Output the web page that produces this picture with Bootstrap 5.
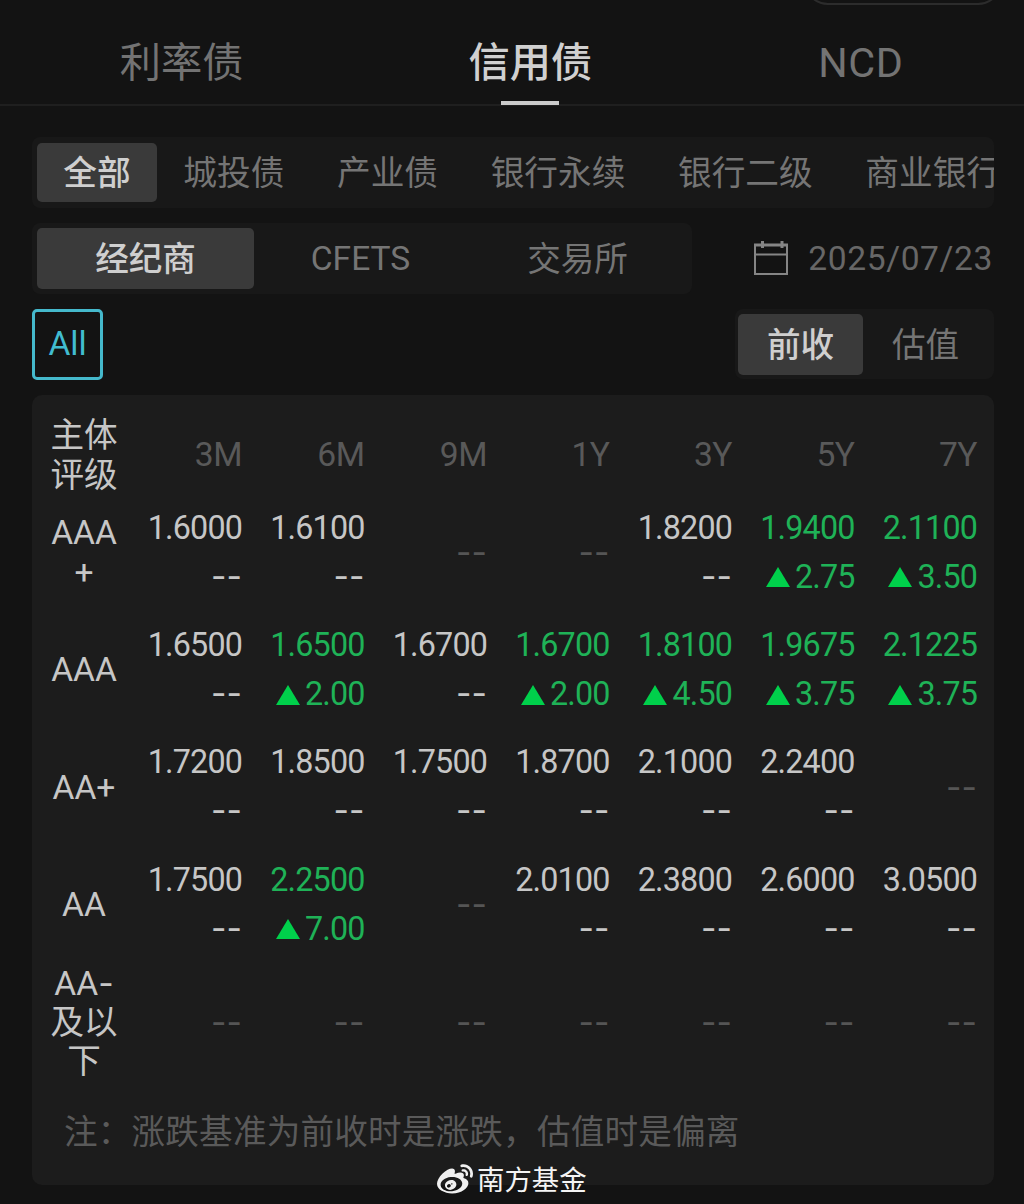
<!DOCTYPE html>
<html lang="zh-CN" data-bs-theme="dark">
<head>
<meta charset="utf-8">
<meta name="viewport" content="width=device-width, initial-scale=1">
<title>信用债</title>
<link href="https://cdn.jsdelivr.net/npm/bootstrap@5.3.0/dist/css/bootstrap.min.css" rel="stylesheet">
<style>
body{background:#131313;color:#c6c6c6;font-family:Roboto,"Noto Sans CJK SC",sans-serif;font-size:33.6px;line-height:40px;height:1204px;overflow:hidden;white-space:nowrap}
.pill-edge{left:804px;top:-50px;width:198px;height:55px;border:2px solid #2c2c2c;border-radius:24px}
.top-tabs{height:106px;border-bottom:2px solid #1f1f1f;font-size:41.3px}
.top-tabs .nav-link{padding:18px 0 0;height:105px;line-height:90px;color:#737373}
.top-tabs .nav-link.active{color:#d0d0d0;font-weight:500}
.tab-a{width:364px}.tab-b{width:335px}.tab-c{width:327px;letter-spacing:.6px}
.tab-line{left:138px;bottom:0;width:58px;height:4px;background:#cbcbcb}
.main-pad{padding:31px 30px 0 32px}
.seg{background:#181818;border-radius:8px;overflow:hidden}
.seg .btn{font-size:inherit;line-height:40px;border:0;padding:2px 0 0;border-radius:5px;color:#757575;flex-shrink:0}
.seg .btn.active{background:#3a3a3a;color:#cfcfcf;font-weight:500}
.seg-kind{height:71px;padding:6px 0 6px 5px;font-size:33.7px}
.seg-kind .btn{padding:2px 26.3px 0}
.seg-src{width:660px;height:71px;margin-top:15px;padding:5px}
.seg-src .btn{width:217px}
.seg-src .btn + .btn{margin-left:-2px;margin-right:2px}
.seg-src .btn.latin{padding-top:0}
.seg-base{width:259px;height:70px;padding:5px 3px 4px}
.seg-base .btn{width:125px}
.date-txt{color:#676767;letter-spacing:.6px;font-size:33.6px;margin-right:1px}
.cal-icon{margin-right:17px}
.all-box{width:71px;height:71px;border:3px solid #45b9cc;border-radius:5px;color:#41bcd0;line-height:63px}
.row-third{margin-top:15px}
.grid-card{margin-top:15px;height:790px;background:#1c1c1c;border-radius:10px;padding:18px 16px 0 13px}
.g-row{height:117.4px}
.g-row.g-head{height:82px;color:#595959}
.g-name{width:78px;white-space:normal;line-height:39.4px;color:#c6c6c6;padding-bottom:2px}
.g-head .g-name{padding:3px 0 0}
.g-val{width:122.5px;line-height:49px;letter-spacing:-.5px}
.g-num{font-size:32.3px;letter-spacing:-.85px;padding-bottom:2px}
.g-first{width:119px}
.g-up{color:#1fb257}
.g-up svg{fill:#00d04b;margin-right:5px}
.dashes{font-family:Inter,sans-serif;letter-spacing:0;font-size:33.6px}
.g-num .dashes{line-height:46px;padding-bottom:3px}
.g-none{color:#555;padding-bottom:0}
.note{padding-left:19px;margin-top:31px;color:#5a5a5a;letter-spacing:.2px}
.water{left:437px;top:1159px;font-size:27.4px;color:#f4f4f4;gap:4px}
.water span{padding-top:2px}
</style>
<script src="https://cdn.jsdelivr.net/npm/bootstrap@5.3.0/dist/js/bootstrap.bundle.min.js"></script>
</head>
<body>
<div class="pill-edge position-absolute"></div>
<nav class="nav top-tabs flex-nowrap text-center">
  <a class="nav-link tab-a">利率债</a>
  <a class="nav-link tab-b active position-relative">信用债<span class="tab-line position-absolute"></span></a>
  <a class="nav-link tab-c">NCD</a>
</nav>
<main class="main-pad">
  <div class="seg seg-kind d-flex">
    <button class="btn active">全部</button><button class="btn">城投债</button><button class="btn">产业债</button><button class="btn">银行永续</button><button class="btn">银行二级</button><button class="btn">商业银行</button>
  </div>
  <div class="d-flex justify-content-between">
    <div class="seg seg-src d-flex">
      <button class="btn active">经纪商</button><button class="btn latin">CFETS</button><button class="btn">交易所</button>
    </div>
    <div class="d-flex align-items-center pt-3">
      <svg class="cal-icon" width="40" height="36" viewBox="0 0 40 36" fill="none" stroke="#858585" stroke-width="2"><path d="M4 4H36V33H4ZM4 13.500H36"/><path stroke-width="3" d="M11.500 0V7M31 0V7M3 4H37"/></svg>
      <span class="date-txt">2025/07/23</span>
    </div>
  </div>
  <div class="row-third d-flex justify-content-between">
    <div class="all-box text-center">All</div>
    <div class="seg seg-base d-flex"><button class="btn active">前收</button><button class="btn">估值</button></div>
  </div>
  <section class="grid-card" id="grid"></section>
</main>
<div class="water position-absolute d-flex align-items-center">
  <svg width="36" height="36" viewBox="0 0 512 512" fill="#f0f0f0"><path d="M407 177.600c7.600-24-13.400-46.800-37.400-41.700-22 4.800-28.800-28.100-7.100-32.800 50.100-10.900 92.300 37.100 76.500 84.800-6.800 21.200-38.800 10.800-32-10.300zM214.800 446.700C108.500 446.700 0 395.300 0 310.400c0-44.300 28-95.400 76.300-143.700C176 67 279.500 65.800 249.900 161c-4 13.100 12.300 5.700 12.300 6 79.500-33.600 140.500-16.800 114 51.400-3.700 9.400 1.100 10.900 8.300 13.100 135.700 42.300 34.800 215.200-169.700 215.200zm143.700-146.300c-5.400-55.700-78.500-94-163.400-85.700-84.800 8.600-148.800 60.300-143.400 116s78.500 94 163.400 85.700c84.800-8.600 148.800-60.300 143.400-116zM347.900 35.100c-25.900 5.600-16.800 43.700 8.300 38.300 72.300-15.200 134.800 52.800 111.700 124-7.400 24.200 29.100 37 37.400 12 31.900-99.800-55.100-195.900-157.400-174.300zm-78.500 311c-17.100 38.800-66.800 60-109.100 46.300-40.800-13.100-58-53.400-40.300-89.700 17.700-35.400 63.100-55.400 103.400-45.100 42 10.800 63.100 50.200 46 88.500zm-86.300-30c-12.900-5.400-30 .3-38 12.900-8.300 12.900-4.300 28 8.600 34 13.100 6 30.800.3 39.100-12.900 8-13.100 3.700-28.300-9.700-34zm32.600-13.400c-5.100-1.700-11.400.6-14.300 5.400-2.900 5.100-1.400 10.600 3.700 12.900 5.100 2 11.700-.3 14.600-5.400 2.800-5.200 1.100-10.900-4-12.900z"/></svg>
  <span>南方基金</span>
</div>
<script>
// Each cell is "yield" or "yield/change"; an empty string is a missing quote.
const rows = [
  ['AAA<br>+', '1.6000','1.6100','','','1.8200','1.9400/2.75','2.1100/3.50'],
  ['AAA', '1.6500','1.6500/2.00','1.6700','1.6700/2.00','1.8100/4.50','1.9675/3.75','2.1225/3.75'],
  ['AA+', '1.7200','1.8500','1.7500','1.8700','2.1000','2.2400',''],
  ['AA', '1.7500','2.2500/7.00','','2.0100','2.3800','2.6000','3.0500'],
  ['AA<span class="dashes">-</span><br>及以<br>下', '','','','','','','']
];
const tri = '<svg width="24" height="20" viewBox="0 0 24 20"><path d="M12 0L24 20H0Z"/></svg>';
const cell = (v, i) => {
  const first = i ? '' : ' g-first';
  if (!v) return `<div class="g-val g-num text-end g-none${first}"><div class="dashes">--</div></div>`;
  const [y, d] = v.split('/');
  return d
    ? `<div class="g-val g-num text-end g-up${first}"><div>${y}</div><div class="d-flex justify-content-end align-items-center">${tri}${d}</div></div>`
    : `<div class="g-val g-num text-end${first}"><div>${y}</div><div class="dashes">--</div></div>`;
};
const head = ['3M','6M','9M','1Y','3Y','5Y','7Y'].map((t, i) => `<div class="g-val text-end${i ? '' : ' g-first'}">${t}</div>`).join('');
document.getElementById('grid').innerHTML =
  `<div class="g-row g-head d-flex align-items-center"><div class="g-name text-center">主体<br>评级</div>${head}</div>` +
  rows.map(r => `<div class="g-row d-flex align-items-center"><div class="g-name text-center">${r[0]}</div>${r.slice(1).map(cell).join('')}</div>`).join('') +
  '<div class="note">注：涨跌基准为前收时是涨跌，估值时是偏离</div>';
</script>
</body>
</html>
